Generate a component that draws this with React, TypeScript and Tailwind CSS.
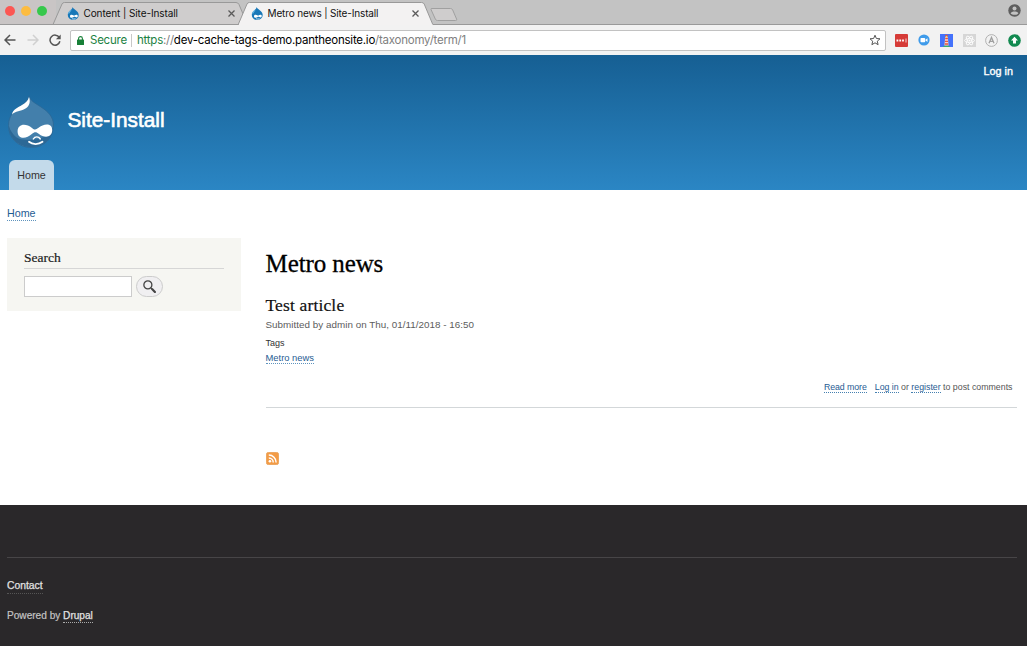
import React from "react";

const sans = "font-['Liberation_Sans',Arial,sans-serif]";
const serif = "font-['Liberation_Serif',Georgia,serif]";
const dotted = "border-b border-dotted";

function Favicon() {
  return (
    <svg className="h-[13px] w-[12px] shrink-0" viewBox="0 0 12 13">
      <path d="M5.6 0C6 1.6 7.5 2.2 9 3.4c1.600 1.200 2.700 2.700 2.700 4.500A5.200 5 0 0 1 6.300 13 5.300 5 0 0 1 .8 7.800C.8 5.600 2.300 4.200 3.600 3 4.700 2.100 5.500 1.400 5.600 0z" fill="#1878b8" />
      <path d="M.8 6.500C1.500 4.600 3.300 3.300 5 2.300L2.200 6.600z" fill="#6db9e4" />
      <path d="M3 9.200c0-1.500 1.900-1.900 3.300-.9.600.4.900.5 1.500 0 1.200-1 3-.6 3 .8 0 1.300-1.300 1.800-2.400.9-.7-.5-1-.4-1.700.1C5 11.200 3 10.800 3 9.200z" fill="#fff" />
      <path d="M5 11.700c1 .5 2.400.5 3.400-.1" stroke="#fff" strokeWidth=".8" fill="none" />
    </svg>
  );
}

function Close() {
  return (
    <svg className="h-[7px] w-[7px] shrink-0" viewBox="0 0 7 7">
      <path d="M.5.5l6 6M6.500.5l-6 6" stroke="#5a5a5a" strokeWidth="1.300" />
    </svg>
  );
}

function TabStrip() {
  return (
    <div className="relative flex h-[25px] bg-[#c3c3c3]">
      <svg className="absolute inset-0 h-[25px] w-[1027px]" viewBox="0 0 1027 25">
        <rect width="56" height="25" fill="#c9c5c5" />
        <path d="M53 24.500L62 4Q62.600 2.500 64.500 2.500H236Q238 2.500 239 4.500L247.500 24.500z" fill="#cfcdcd" stroke="#999" />
        <path d="M0 24.500H1027" stroke="#999" />
        <path d="M238 25L247 4Q247.600 2.500 249.500 2.500H421.500Q423.500 2.500 424.200 4L433 25z" fill="#f3f2f2" stroke="#999" />
        <path d="M239 25H432.500" stroke="#f3f2f2" strokeWidth="2" />
        <path d="M431 9.500Q430.500 8.500 432 8.500H450.500Q452 8.500 452.600 9.800L456.700 19.300Q457 20.500 455.500 20.500H437.500Q436 20.500 435.400 19.200z" fill="#cfcdcd" stroke="#a0a0a0" />
      </svg>
      <div className="relative flex w-[66.500px] gap-[6px] pl-[4.500px] pt-[5.500px]">
        <span className="h-[10px] w-[10px] rounded-full bg-[#fc5753]" />
        <span className="h-[10px] w-[10px] rounded-full bg-[#fdbc40]" />
        <span className="h-[10px] w-[10px] rounded-full bg-[#36c84b]" />
      </div>
      <div className="relative flex h-[25px] w-[184px] items-center pt-[2px]">
        <Favicon />
        <span className="ml-[5px] w-[144px] whitespace-nowrap text-[10px] tracking-[-.09px] text-[#111]">Content | Site-Install</span>
        <Close />
      </div>
      <div className="relative flex h-[25px] items-center pt-[2px]">
        <Favicon />
        <span className="ml-[5px] w-[144px] whitespace-nowrap text-[10px] tracking-[-.15px] text-[#111]">Metro news | Site-Install</span>
        <Close />
      </div>
      <svg className="relative ml-auto mr-[6px] mt-[4px] h-[13px] w-[13px]" viewBox="0 0 13 13">
        <circle cx="6.500" cy="6.500" r="6.200" fill="#5e5e5e" />
        <circle cx="6.500" cy="4.400" r="2" fill="#c3c3c3" />
        <path d="M2.600 9.200C3.600 6.900 9.400 6.900 10.400 9.200 8.800 11.400 4.200 11.400 2.600 9.200z" fill="#c3c3c3" />
      </svg>
    </div>
  );
}

function Toolbar() {
  return (
    <div className="flex h-[30px] items-center bg-[#f2f2f2] pl-[4px]">
      <svg className="h-[12px] w-[12px]" viewBox="0 0 12 12" fill="none" stroke="#555" strokeWidth="1.500">
        <path d="M11.500 6H1M6 1L1 6l5 5" />
      </svg>
      <svg className="ml-[11px] h-[12px] w-[12px]" viewBox="0 0 12 12" fill="none" stroke="#d0d0d0" strokeWidth="1.500">
        <path d="M.5 6H11M6 1l5 5-5 5" />
      </svg>
      <svg className="ml-[10px] h-[12px] w-[12px]" viewBox="0 0 12 12">
        <path d="M10.300 3.500A5 5 0 1 0 10.900 7.300" fill="none" stroke="#555" strokeWidth="1.500" />
        <path d="M11.700.4V5.200H6.900z" fill="#555" />
      </svg>
      <div className="ml-[9px] flex h-[21px] w-[816px] items-center rounded-[2px] border border-[#c2c2c2] bg-white pl-[6px] pr-[4px] text-[11.500px] tracking-[-.24px]">
        <svg className="h-[9px] w-[7px]" viewBox="0 0 7 9">
          <rect y="3.500" width="7" height="5.500" rx=".5" fill="#188038" />
          <path d="M1.600 4V2.500a1.900 1.900 0 0 1 3.800 0V4" fill="none" stroke="#188038" strokeWidth="1.100" />
        </svg>
        <span className="ml-[6px] mt-[1px] w-[41px] whitespace-nowrap text-[#1c8242]">Secure</span>
        <span className="h-[13px] w-px bg-[#c8c8c8]" />
        <span className="ml-[5px] mt-[1px] whitespace-nowrap text-black">
          <span className="text-[#1c8242]">https</span>
          <span className="text-[#808080]">://</span>dev-cache-tags-demo.pantheonsite.io<span className="text-[#808080]">/taxonomy/term/1</span>
        </span>
        <svg className="ml-auto h-[12px] w-[12px]" viewBox="0 0 12 12">
          <path d="M6 1.200l1.400 3.300 3.600.3-2.700 2.400.8 3.500L6 8.800l-3.100 1.900.8-3.500L1 4.800l3.600-.3z" fill="none" stroke="#555" strokeWidth="1" />
        </svg>
      </div>
      <svg className="ml-[9px] h-[13px] w-[13px]" viewBox="0 0 13 13">
        <rect width="13" height="13" rx="1" fill="#d63b37" />
        <path d="M1.500 6.500h8" stroke="#fff" strokeWidth="1.800" strokeDasharray="1.800 1" />
        <path d="M11 4.500v4" stroke="#fff" strokeWidth=".8" />
      </svg>
      <svg className="ml-[10px] h-[12px] w-[12px]" viewBox="0 0 12 12">
        <circle cx="6" cy="6" r="5.600" fill="#3f9bea" />
        <rect x="2.500" y="4" width="4.700" height="4.200" rx=".8" fill="#fff" />
        <path d="M7.500 5.700L9.500 4.300v3.600L7.500 6.600z" fill="#fff" />
      </svg>
      <svg className="ml-[10px] h-[13px] w-[13px]" viewBox="0 0 13 13">
        <rect width="13" height="13" fill="#4472fb" />
        <path d="M2.500 13q4-3.500 8 0z" fill="#3cae68" />
        <path d="M5.200 3h2.600l.8 8.500H4.400z" fill="#f6d5cb" />
        <path d="M5.200 1.500h2.600M5.200 4.500h2.700M5 7.300h3M4.800 10h3.400" stroke="#e5573e" strokeWidth="1.300" />
        <rect x="5.700" y="2" width="1.600" height="1.300" fill="#ffd755" />
      </svg>
      <svg className="ml-[10px] h-[13px] w-[13px]" viewBox="0 0 13 13">
        <rect width="13" height="13" fill="#d6d6d6" />
        <g fill="none" stroke="#fff" strokeWidth=".8">
          <ellipse cx="6.500" cy="6.500" rx="5" ry="2" />
          <ellipse cx="6.500" cy="6.500" rx="5" ry="2" transform="rotate(60 6.500 6.500)" />
          <ellipse cx="6.500" cy="6.500" rx="5" ry="2" transform="rotate(120 6.500 6.500)" />
        </g>
        <circle cx="6.500" cy="6.500" r="1" fill="#fff" />
      </svg>
      <svg className="ml-[9px] h-[13px] w-[13px]" viewBox="0 0 13 13" fill="none">
        <circle cx="6.500" cy="6.500" r="5.900" stroke="#aaa" strokeWidth=".9" />
        <path d="M4 9.300L6.500 3.500 9 9.300M5 7.300h3" stroke="#a0a0a0" strokeWidth="1.300" />
      </svg>
      <svg className="ml-[10px] h-[13px] w-[13px]" viewBox="0 0 13 13">
        <circle cx="6.500" cy="6.500" r="6.300" fill="#128a50" />
        <path d="M6.500 2.800L10 6.600H8v3H5v-3H3z" fill="#fff" />
      </svg>
    </div>
  );
}

function Druplicon() {
  return (
    <svg className="-mt-px h-[52px] w-[46px]" viewBox="0 0 46 52">
      <path d="M21 0C22.500 5 27 7 33 11c7 4.500 12.500 10 12.500 18C45.500 42 36 51.500 23.500 51.500 10.500 51.500.5 42.500.5 29.500.5 20 6 14.500 11.500 10.500 16.500 7 20 5 21 0z" fill="#437fab" stroke="#2b6796" strokeWidth=".8" />
      <path d="M.8 30C4 39 9 43 15 43.500 27 44.500 40 43 45.200 31 45 43 35.500 51 23.500 51 11.500 51 1 43 .8 30z" fill="#2c6896" />
      <path d="M4 18.500C5 13 10 11.500 14 9 17.500 7 20 5 21 1c1.500 4 1 9-3.500 11.500C12.500 15.500 7.500 15 4 18.500z" fill="#fff" />
      <path d="M9.600 35.500c0-8 8.400-8.500 14.400-3.500 2.500 2 3.800 2 6.200.1 5.800-5 14-5.200 14 1.900 0 7.500-7.500 8.500-13.200 4-2.900-2.300-4.400-2.300-7.200.1C18.300 43.300 9.600 43.500 9.600 35.500z" fill="#fff" />
      <path d="M25.300 43c1.700-2.800 5.200-2.800 7 0" fill="none" stroke="#fff" strokeWidth="1.400" strokeLinecap="round" />
      <path d="M21 45.800c3.500 3 9.500 3 13.500 0" fill="none" stroke="#fff" strokeWidth="1.800" strokeLinecap="round" />
    </svg>
  );
}

function Header() {
  return (
    <header className="flex h-[135px] flex-col bg-linear-to-b from-[#165f93] to-[#2b86c4]">
      <div className="flex h-[42px] justify-end pr-[14px] pt-[9px] text-[10.800px] leading-[14px] text-white [-webkit-text-stroke:.35px]">
        <a>Log in</a>
      </div>
      <div className="flex h-[63px] pl-[7.500px]">
        <Druplicon />
        <span className="ml-[14px] mt-[10px] text-[20.800px] leading-[26px] text-white [-webkit-text-stroke:.6px]">Site-Install</span>
      </div>
      <nav className="flex pl-[9px]">
        <a className="flex h-[30px] w-[45px] items-center justify-center rounded-t-[6px] bg-[#c3daea] text-[10.700px] text-[#333]">Home</a>
      </nav>
    </header>
  );
}

function SearchBlock() {
  return (
    <aside className="h-[73px] w-[234px] bg-[#f6f6f2] px-[17px] pt-[11px]">
      <h2 className={`h-[20px] border-b border-[#d6d6d6] text-[13.500px] leading-[17px] text-[#222] [-webkit-text-stroke:.2px] ${serif}`}>Search</h2>
      <div className="mt-[7px] flex gap-[4px]">
        <input aria-label="Search" className="h-[21px] w-[108px] border border-[#ccc] bg-white outline-none" />
        <button aria-label="Submit" className="flex h-[21px] w-[27px] items-center justify-center rounded-full border border-[#ccc] bg-[#f0eff1]">
          <svg className="-ml-[1px] -mt-[1px] h-[13px] w-[13px]" viewBox="0 0 12 12" fill="none" stroke="#444">
            <circle cx="4.500" cy="4.500" r="3.700" strokeWidth="1.200" />
            <path d="M7.300 7.300l1.500 1.500" strokeWidth="1.200" />
            <path d="M8.600 8.600l2.400 2.400" strokeWidth="2" strokeLinecap="round" />
          </svg>
        </button>
      </div>
    </aside>
  );
}

function Article() {
  return (
    <main className="ml-[24.500px] w-[751px] pt-[9px]">
      <h1 className={`h-[46px] text-[25px] leading-[34px] tracking-[-.1px] text-black [-webkit-text-stroke:.3px] ${serif}`}>Metro news</h1>
      <h2 className={`h-[24px] text-[17.500px] leading-[24px] tracking-[.15px] text-[#111] [-webkit-text-stroke:.2px] ${serif}`}>Test article</h2>
      <p className="h-[18px] text-[9.840px] leading-[15px] tracking-[.03px] text-[#5c5c5c]">Submitted by admin on Thu, 01/11/2018 - 16:50</p>
      <p className="h-[17px] text-[9px] leading-[17px] text-[#333]">Tags</p>
      <div className="flex h-[30px] text-[9.400px] leading-[11px] text-[#1f5c93]">
        <a className={`h-[12px] ${dotted} border-[#5f93bd]`}>Metro news</a>
      </div>
      <div className="flex h-[26px] justify-end border-b border-[#d3d7d9] pr-[4px] text-[8.800px] leading-[10px] text-[#555]">
        <a className={`mr-[8px] h-[11px] ${dotted} border-[#4580b0] tracking-[-.08px] text-[#1f5c93]`}>Read more</a>
        <a className={`h-[11px] ${dotted} border-[#4580b0] text-[#1f5c93]`}>Log in</a>
        <span className="mx-[2.400px]">or</span>
        <a className={`h-[11px] ${dotted} border-[#4580b0] text-[#1f5c93]`}>register</a>
        <span className="ml-[2.400px]">to post comments</span>
      </div>
      <svg className="mt-[44px] h-[13px] w-[13px]" viewBox="0 0 14 14">
        <rect x=".5" y=".5" width="13" height="13" rx="2" fill="#f39b45" stroke="#e9a35c" />
        <circle cx="4.200" cy="10" r="1.400" fill="#fff" />
        <path d="M3 6.400A4.800 4.800 0 0 1 7.800 11.200M3 3.300A7.900 7.900 0 0 1 10.900 11.200" fill="none" stroke="#fff" strokeWidth="1.600" />
      </svg>
    </main>
  );
}

function Footer() {
  return (
    <footer className="h-[141px] bg-[#2a282a] px-[7px] pt-[52px] text-[#c4c4c4]">
      <div className="mr-[3px] border-t border-[#474547]" />
      <div className="mt-[22px] flex h-[30px] text-[10.350px] leading-[12px]">
        <a className={`h-[14px] ${dotted} border-[#555] text-[#e2e2e2] [-webkit-text-stroke:.25px]`}>Contact</a>
      </div>
      <div className="flex text-[10.100px] leading-[12px]">
        <span className="mr-[2.800px] [-webkit-text-stroke:.2px]">Powered by</span>
        <a className={`h-[13px] ${dotted} border-[#aaa] text-[#e2e2e2] [-webkit-text-stroke:.25px]`}>Drupal</a>
      </div>
    </footer>
  );
}

export default function App() {
  return (
    <div className={`h-[646px] w-[1027px] overflow-hidden bg-white ${sans}`}>
      <div className="font-['Inter','Liberation_Sans',sans-serif]">
        <TabStrip />
        <Toolbar />
      </div>
      <Header />
      <div className="h-[315px]">
        <div className="flex h-[48px] pl-[7px] pt-[17px] text-[10.700px] leading-[13px] text-[#1f5c93]">
          <a className={`h-[14px] ${dotted} border-[#5f93bd]`}>Home</a>
        </div>
        <div className="flex pl-[7px]">
          <SearchBlock />
          <Article />
        </div>
      </div>
      <Footer />
    </div>
  );
}
